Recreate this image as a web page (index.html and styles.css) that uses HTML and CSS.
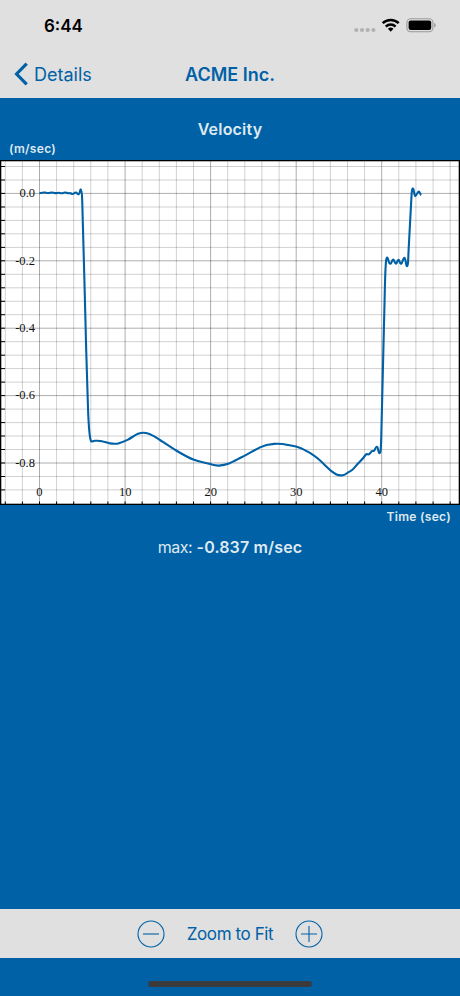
FILE: index.html
```html
<!DOCTYPE html>
<html lang="en">
<head>
	<meta charset="UTF-8">
	<meta name="viewport" content="width=device-width, initial-scale=1.0">
	<title>Velocity</title>
	<link rel="stylesheet" href="styles.css">
</head>
<body>
	<div class="screen">
		<div class="status">
			<span class="time">6:44</span>
			<svg class="statusIcons" width="84" height="18" viewBox="0 0 84 18">
				<g fill="#b1b1b1">
					<circle cx="4.3" cy="13" r="2.1"/>
					<circle cx="10" cy="13" r="2.1"/>
					<circle cx="15.7" cy="13" r="2.1"/>
					<circle cx="21.4" cy="13" r="2.1"/>
				</g>
				<!-- wifi -->
				<g fill="none" stroke="#000" stroke-width="2.5">
					<path d="M30.7 6.2a11.3 11.3 0 0 1 16 0"/>
					<path d="M33.8 9.6a7 7 0 0 1 9.8 0"/>
				</g>
				<path d="M35.9 11.8a4 4 0 0 1 5.6 0l-2.8 2.9z"/>
				<!-- battery -->
				<rect x="54.9" y="1.8" width="26" height="13" rx="3.8" fill="none" stroke="#999" stroke-width="1.1"/>
				<rect x="56.6" y="3.6" width="22.6" height="9.4" rx="2"/>
				<path d="M82.1 6.1q1.6.6 1.6 2.2t-1.6 2.2z" fill="#999"/>
			</svg>
		</div>
		<div class="nav">
			<a class="back" href="#">
				<svg width="15" height="24" viewBox="0 0 15 24"><path d="M12.7 1.6L2.6 12l10.1 10.4" fill="none" stroke="currentColor" stroke-width="3.2"/></svg>
				<span>Details</span>
			</a>
			<h1>ACME Inc.</h1>
		</div>
		<div class="content">
			<h2>Velocity</h2>
			<div class="unitY">(m/sec)</div>
			<svg class="chart" width="460" height="345" viewBox="0 160 460 345">
				<rect x="0" y="160" width="460" height="345" fill="#fff"/>
				<!-- minor grid -->
				<path class="minor" d="M5.3 160v345M22.4 160v345M56.6 160v345M73.7 160v345M90.8 160v345M107.9 160v345M142.2 160v345M159.3 160v345M176.4 160v345M193.5 160v345M227.7 160v345M244.8 160v345M261.9 160v345M279.1 160v345M313.3 160v345M330.4 160v345M347.5 160v345M364.6 160v345M398.8 160v345M415.9 160v345M433.1 160v345M450.2 160v345"/>
				<path class="minor" d="M0 166.5h460M0 180h460M0 207h460M0 220.4h460M0 233.8h460M0 247.4h460M0 274.3h460M0 287.8h460M0 301.3h460M0 314.7h460M0 341.7h460M0 355.2h460M0 368.6h460M0 382.1h460M0 409.1h460M0 422.6h460M0 436h460M0 449.5h460M0 476.5h460M0 489.9h460"/>
				<!-- major grid -->
				<path class="major" d="M39.5 160v345M125.1 160v345M210.6 160v345M296.2 160v345M381.7 160v345M0 193.4h460M0 260.8h460M0 328.2h460M0 395.6h460M0 463h460"/>
				<!-- ticks -->
				<path class="tick" d="M0 166.5h5M0 180h5M0 193.4h5M0 207h5M0 220.4h5M0 233.8h5M0 247.4h5M0 260.8h5M0 274.3h5M0 287.8h5M0 301.3h5M0 314.7h5M0 328.2h5M0 341.7h5M0 355.2h5M0 368.6h5M0 382.1h5M0 395.6h5M0 409.1h5M0 422.6h5M0 436h5M0 449.5h5M0 463h5M0 476.5h5M0 489.9h5"/>
				<path class="tick" d="M5.3 501.5v3M22.4 501.5v3M39.5 501.5v3M56.6 501.5v3M73.7 501.5v3M90.8 501.5v3M107.9 501.5v3M125.1 501.5v3M142.2 501.5v3M159.3 501.5v3M176.4 501.5v3M193.5 501.5v3M210.6 501.5v3M227.7 501.5v3M244.8 501.5v3M261.9 501.5v3M279.1 501.5v3M296.2 501.5v3M313.3 501.5v3M330.4 501.5v3M347.5 501.5v3M364.6 501.5v3M381.7 501.5v3M398.8 501.5v3M415.9 501.5v3M433.1 501.5v3M450.2 501.5v3"/>
				<rect x="0.5" y="160.5" width="459" height="344" fill="none" stroke="#000" stroke-width="1.6"/>
				<g class="labels" text-anchor="end">
					<text x="35" y="197.2">0.0</text>
					<text x="35" y="264.6">-0.2</text>
					<text x="35" y="332">-0.4</text>
					<text x="35" y="399.4">-0.6</text>
					<text x="35" y="466.8">-0.8</text>
				</g>
				<g class="labels" text-anchor="middle">
					<text x="39.3" y="496">0</text>
					<text x="125.2" y="496">10</text>
					<text x="210.7" y="496">20</text>
					<text x="296.2" y="496">30</text>
					<text x="381.8" y="496">40</text>
				</g>
				<path class="line" d="M39.5 193.1C42 193.1 43 192.3 45 192.6S48 193.3 50 192.7S53 192.7 55 193.1S58 192.3 60 193S62 193.4 64 192.6S67 193.7 69 193.2S71 193.8 72.5 194S74.5 192 76 192.5S77.5 195 78.8 194.2S79.8 189.2 80.7 189.2S82 192 82.2 200L84.4 280L86.2 350L88 408C88.6 425 89.6 438 91 441.2C92 442.2 93 440.6 95 440.7S99 440.4 102 441.2S107 443 110 443.4S116 444.2 119 443.2S125 441 128 439.6S135 434.8 138 433.8S144 432.3 148 433.4S155 436.7 160 440S171 447.4 177 451S188 457.5 194 459.8S204 462.1 208 463.5S215 466 219 465.6S225 464.8 229 463.4S237 459.5 242 457S254 450.4 260 447.4S269 444.2 274 443.9S284 444.1 288 445S295 446.2 299 447.4S307 451.2 311 453.6S321 461 326 466.2S333 472.6 336 474.2S340 475.8 343 475.2S347 472.6 350 471.4S355 466.7 358 463.5S363 459 365 455.6S368 456 370 453.4S372 450.8 373.5 451S375.2 446.8 376.8 446.9S378 453 379.4 453.2S380.9 449 381.3 435L384.6 300C385 280 385.5 263 386.3 259.5C386.9 256.7 387.6 256.8 388.3 260S389.5 264 390.6 263.8S392 259.3 393.2 259.6S394.8 264 396 263.7S397.3 259.4 398.5 259.7S399.8 264.2 401.2 263.7S403 257.8 404.4 257.8S405.8 266.2 407 266.2S408.2 259 408.6 250L411.6 194C411.9 189.8 412.5 187.8 413.2 188.6S414.2 195.8 415.3 196.1S417.6 191.2 418.8 191.6S419.9 194.2 421.3 195"/>
			</svg>
			<div class="unitX">Time (sec)</div>
			<p class="max"><span>max:</span> <b>-0.837 m/sec</b></p>
		</div>
		<div class="toolbar">
			<svg class="zoomBtn" width="28" height="28" viewBox="0 0 28 28">
				<circle cx="14" cy="14" r="13"/>
				<path d="M6 14h16"/>
			</svg>
			<span class="fit">Zoom to Fit</span>
			<svg class="zoomBtn" width="28" height="28" viewBox="0 0 28 28">
				<circle cx="14" cy="14" r="13"/>
				<path d="M6 14h16M14 6v16"/>
			</svg>
		</div>
		<div class="bottom">
			<div class="home"></div>
		</div>
	</div>
</body>
</html>
```
FILE: styles.css
```css
*{
	padding: 0;
	margin: 0;
	box-sizing: border-box;
}
body{
	background-color: #0061a6;
	font-family: Inter, "Liberation Sans", sans-serif;
	color: #0061a6;
}
.screen{
	width: 460px;
	height: 996px;
	display: flex;
	flex-direction: column;
	overflow: hidden;
}
.status{
	height: 50px;
	background-color: #e0e0e0;
	display: flex;
	justify-content: space-between;
	padding: 15px 24px 0 44px;
}
.time{
	font-size: 17px;
	line-height: 22px;
	font-weight: 600;
	color: #000;
}
.statusIcons{
	margin-top: 2px;
}
.nav{
	height: 48px;
	background-color: #e0e0e0;
	display: grid;
	grid-template-columns: 1fr auto 1fr;
	align-items: center;
	padding: 0 14px;
}
.back{
	display: flex;
	align-items: center;
	gap: 5px;
	color: #0061a6;
	text-decoration: none;
	font-size: 18px;
}
.nav h1{
	font-size: 18px;
	font-weight: 600;
}
.content{
	flex: 1;
	color: #dfe9f1;
}
.content h2{
	height: 42px;
	padding-top: 21px;
	font-size: 16px;
	line-height: 20px;
	font-weight: 600;
	letter-spacing: 0.2px;
	text-align: center;
}
.unitY,
.unitX{
	font-size: 12px;
	font-weight: 600;
	line-height: 16px;
	letter-spacing: 0.3px;
}
.unitY{
	height: 20px;
	padding: 1px 0 0 9px;
}
.unitX{
	padding: 4px 9px 0 0;
	text-align: right;
}
.chart{
	display: block;
}
.minor,
.major,
.tick{
	fill: none;
	stroke: #000;
}
.minor{
	stroke-opacity: 0.18;
}
.major{
	stroke-opacity: 0.32;
}
.labels{
	font-family: "Liberation Serif", serif;
	font-size: 12.5px;
	fill: #111;
}
.line{
	fill: none;
	stroke: #0061a6;
	stroke-width: 2.1;
	stroke-linejoin: round;
}
.max{
	padding-top: 12px;
	font-size: 16px;
	line-height: 20px;
	text-align: center;
}
.max span{
	letter-spacing: -0.5px;
}
.max b{
	font-weight: 600;
	letter-spacing: 0.15px;
}
.toolbar{
	height: 49px;
	background-color: #e0e0e0;
	display: flex;
	align-items: center;
	justify-content: center;
	gap: 22px;
}
.zoomBtn{
	fill: none;
	stroke: #0061a6;
	stroke-width: 1.1;
}
.fit{
	font-size: 17px;
	letter-spacing: -0.4px;
}
.bottom{
	height: 38px;
	padding-top: 23px;
}
.home{
	width: 164px;
	height: 6px;
	margin: 0 auto;
	border-radius: 3px;
	background-color: #3b3b3d;
}
```
